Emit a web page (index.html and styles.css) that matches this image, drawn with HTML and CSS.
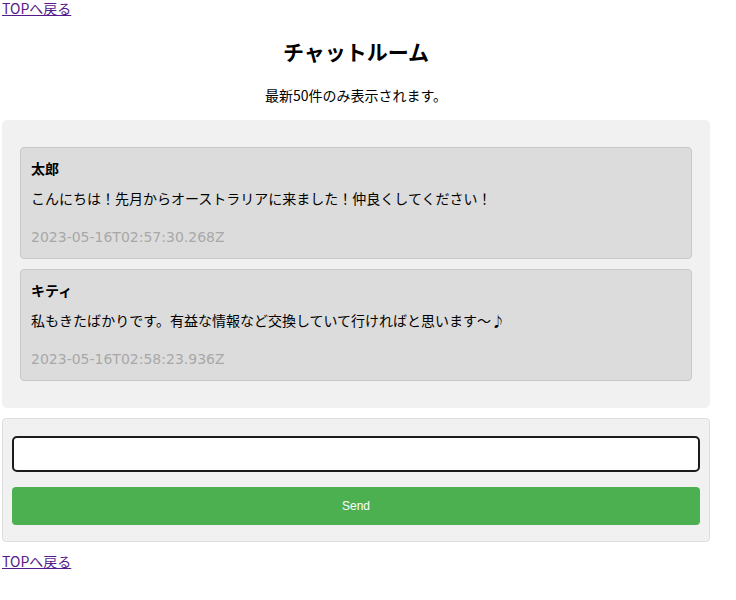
FILE: index.html
```html
<!DOCTYPE html>
<html lang="ja">
<head>
    <meta charset="UTF-8">
    <meta name="viewport" content="width=device-width, initial-scale=1.0">
    <title>チャットルーム</title>
    <link rel="stylesheet" href="styles.css">
</head>
<body>
    <div class="page">
        <a class="top-link" href="#">TOPへ戻る</a>
        <h1>チャットルーム</h1>
        <p class="note">最新50件のみ表示されます。</p>

        <div class="chat-box">
            <div class="message">
                <div class="message-name">太郎</div>
                <div class="message-text">こんにちは！先月からオーストラリアに来ました！仲良くしてください！</div>
                <div class="message-date">2023-05-16T02:57:30.268Z</div>
            </div>
            <div class="message">
                <div class="message-name">キティ</div>
                <div class="message-text">私もきたばかりです。有益な情報など交換していて行ければと思います～♪</div>
                <div class="message-date">2023-05-16T02:58:23.936Z</div>
            </div>
        </div>

        <form class="send-form" onsubmit="return false;">
            <input type="text" class="send-input" autofocus>
            <button type="submit" class="send-button">Send</button>
        </form>

        <a class="top-link bottom" href="#">TOPへ戻る</a>
    </div>
</body>
</html>
```

FILE: styles.css
```css
body {
    margin: 0;
    font-family: "Noto Sans CJK JP", "Noto Sans", sans-serif;
    font-size: 14px;
    color: #000;
    background: #fff;
}

.page {
    width: 708px;
    margin-left: 2px;
}

.top-link {
    display: block;
    width: max-content;
    line-height: 16px;
    color: #551a8b;
    text-decoration: underline;
}

.top-link.bottom {
    margin-top: 11px;
}

h1 {
    margin: 21px 0 0;
    font-size: 21px;
    line-height: 28px;
    font-weight: bold;
    text-align: center;
}

.note {
    margin: 20px 0 15px;
    line-height: 20px;
    text-align: center;
}

.chat-box {
    display: flex;
    flex-direction: column;
    gap: 10px;
    padding: 27px 18px;
    background: #f1f1f1;
    border-radius: 5px;
}

.message {
    padding: 10px;
    background: #dcdcdc;
    border: 1px solid #c8c8c8;
    border-radius: 4px;
}

.message-name {
    font-weight: bold;
    line-height: 20px;
    margin-bottom: 10px;
}

.message-text {
    line-height: 20px;
    margin-bottom: 18px;
}

.message-date {
    font-family: "DejaVu Sans", "Noto Sans CJK JP", sans-serif;
    font-size: 14px;
    line-height: 22px;
    color: #a8a8a8;
}

.send-form {
    display: flex;
    flex-direction: column;
    gap: 15px;
    margin: 10px 0 0;
    padding: 17px 9px 16px;
    background: #f1f1f1;
    border: 1px solid #dedede;
    border-radius: 4px;
}

.send-input {
    box-sizing: border-box;
    height: 36px;
    padding: 0 17px;
    font-size: 14px;
    font-family: inherit;
    border: 2px solid #1c1c1c;
    border-radius: 5px;
    background: #fff;
    caret-color: #000;
}

.send-input:focus {
    outline: none;
}

.send-button {
    height: 38px;
    border: none;
    border-radius: 4px;
    background: #4caf50;
    color: #fff;
    font-family: "Liberation Sans", Arial, sans-serif;
    font-size: 12px;
    cursor: pointer;
}
```
